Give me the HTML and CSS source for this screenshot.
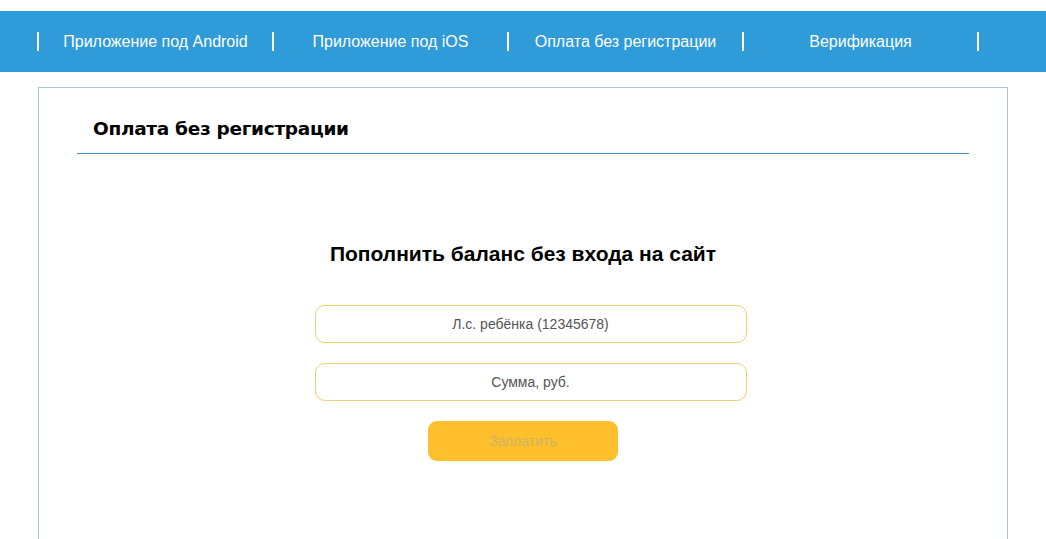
FILE: index.html
```html
<!DOCTYPE html>
<html lang="ru">
<head>
<meta charset="utf-8">
<title>Оплата без регистрации</title>
<link rel="stylesheet" href="styles.css">
</head>
<body>
<header class="topbar">
  <nav class="nav">
    <a class="nav-item" href="#">Приложение под Android</a>
    <a class="nav-item" href="#">Приложение под iOS</a>
    <a class="nav-item" href="#">Оплата без регистрации</a>
    <a class="nav-item nav-item-last" href="#">Верификация</a>
  </nav>
</header>
<main class="panel">
  <h1 class="panel-title">Оплата без регистрации</h1>
  <section class="pay">
    <h2 class="pay-title">Пополнить баланс без входа на сайт</h2>
    <form class="pay-form">
      <div class="fields">
        <input class="field" type="text" placeholder="Л.с. ребёнка (12345678)">
        <input class="field" type="text" placeholder="Сумма, руб.">
      </div>
      <button class="pay-btn" type="button">Заплатить</button>
    </form>
  </section>
</main>
</body>
</html>
```

FILE: styles.css
```css
html, body {
  margin: 0;
  padding: 0;
  background: #ffffff;
}
body {
  font-family: "Liberation Sans", Arial, sans-serif;
  color: #000;
}
.topbar {
  margin-top: 11px;
  height: 61px;
  background: #2f9bd9;
  display: flex;
  align-items: center;
}
.nav {
  display: flex;
  padding-left: 37px;
}
.nav-item {
  width: 235px;
  box-sizing: border-box;
  border-left: 2px solid #ffffff;
  height: 19px;
  line-height: 19px;
  text-align: center;
  color: #ffffff;
  text-decoration: none;
  font-size: 16px;
}
.nav-item-last {
  border-right: 2px solid #ffffff;
  width: 237px;
}
.panel {
  margin: 15px 0 0 38px;
  width: 970px;
  height: 470px;
  box-sizing: border-box;
  border: 1px solid #a9c7d8;
  border-bottom: none;
  padding: 0 38px;
}
.panel-title {
  margin: 0;
  padding: 29px 0 12px 16px;
  font-family: "DejaVu Sans", Verdana, sans-serif;
  font-weight: bold;
  font-size: 18.5px;
  line-height: 24px;
  border-bottom: 1px solid #3d94c5;
  letter-spacing: -0.3px;
}
.pay {
  display: flex;
  flex-direction: column;
  align-items: center;
}
.pay-title {
  margin: 88px 0 0;
  font-size: 21px;
  line-height: 24px;
  font-weight: bold;
}
.pay-form {
  display: flex;
  flex-direction: column;
  align-items: center;
  margin-top: 39px;
}
.fields {
  display: flex;
  flex-direction: column;
  gap: 20px;
  padding-left: 15px;
}
.field {
  width: 432px;
  height: 38px;
  box-sizing: border-box;
  border: 1px solid #f1cf72;
  border-radius: 10px;
  text-align: center;
  font-family: "Liberation Sans", Arial, sans-serif;
  font-size: 14px;
  color: #333;
  outline: none;
  background: #fff;
}
.field::placeholder {
  color: #555555;
}
.pay-btn {
  margin-top: 20px;
  width: 190px;
  height: 40px;
  border: none;
  border-radius: 9px;
  background: #fdc02c;
  color: #d2b064;
  font-family: "Liberation Sans", Arial, sans-serif;
  font-size: 14px;
}
```
